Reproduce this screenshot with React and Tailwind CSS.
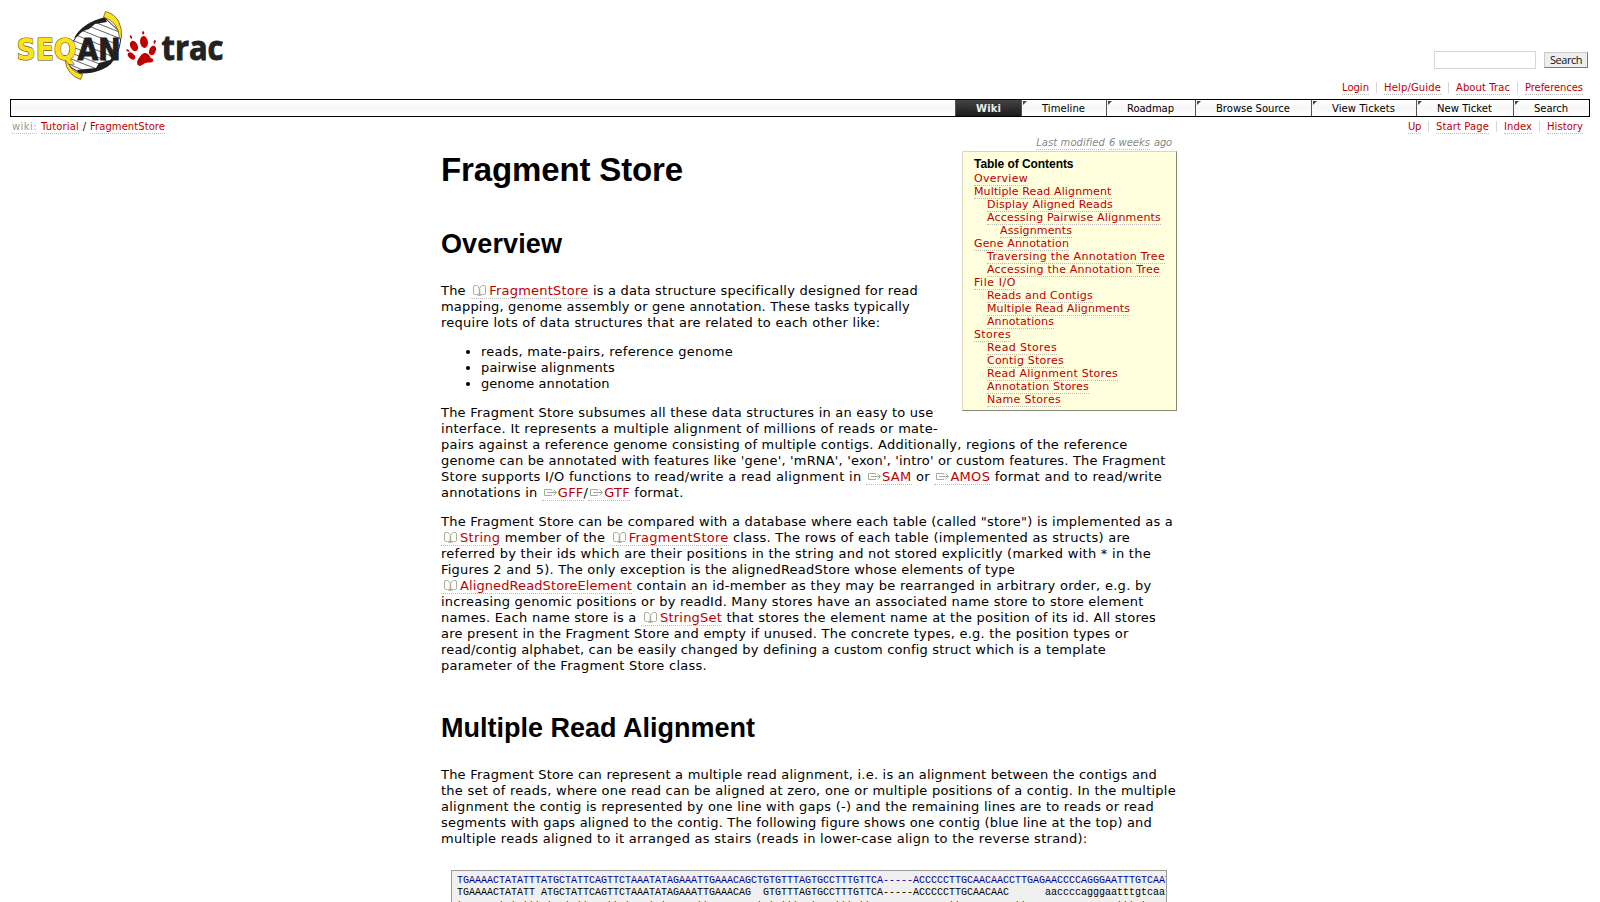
import { useLayoutEffect, useRef, useState } from "react";

/* Spreads letter spacing so that a run of text fills a given measure. */
function Fit({ w, className = "", children }) {
  const ref = useRef(null);
  const [spacing, setSpacing] = useState(0);
  useLayoutEffect(() => {
    const el = ref.current;
    const natural = el.getBoundingClientRect().width;
    setSpacing((w - natural) / el.textContent.length);
  }, [w]);
  return (
    <span
      ref={ref}
      className={`inline-block whitespace-pre ${className}`}
      style={{ letterSpacing: `${spacing}px` }}
    >
      {children}
    </span>
  );
}

const link = "border-b border-dotted border-[#bbbbbb] text-[#bb0000]";

function Line({ w, children }) {
  return (
    <div className="flex h-4">
      <Fit w={w}>{children}</Fit>
    </div>
  );
}

function Doc({ children }) {
  return (
    <a className={link}>
      <svg className="mr-[3px] ml-[3px] inline-block h-[11px] w-[13px] align-[-1px]" viewBox="0 0 13 11" fill="none" stroke="#a9ad97">
        <path d="M3.500 9.500H1.500Q.5 9.500 .5 8.500V2Q.5 .5 2 .5h1.500Q5.500 1 6.500 3.500Q7.500 1 9.500 .5H11Q12.500 .5 12.500 2v6.500q0 1-1 1H9.500" />
        <path d="M6.500 3.500V10.500M4 9.500q2 0 2.500 1q.5-1 2.500-1" strokeWidth="1.500" />
      </svg>
      {children}
    </a>
  );
}

function Ext({ children }) {
  return (
    <a className={link}>
      <svg className="mr-px ml-[2px] inline-block h-[9px] w-[13px] align-[0px]" viewBox="0 0 13 9" fill="none" stroke="#9fac98">
        <path d="M7.500 2.500V1.500H.5v6h7V6.500M3 4.500h9M9.500 1.500l3 3l-3 3" />
      </svg>
      {children}
    </a>
  );
}

function Logo() {
  return (
    <svg className="block h-[72px] w-[216px]" viewBox="15 10 216 72">
      <defs>
        <clipPath id="helix">
          <path d="M106 19Q84 23 74 40Q67 54 69 66L80 73Q101 72 113 60Q121 50 121 33Z" />
        </clipPath>
      </defs>
      <path d="M106 19Q84 23 74 40Q67 54 69 66L80 73Q101 72 113 60Q121 50 121 33Z" fill="#fff" stroke="#231f20" strokeWidth="1" />
      <g clipPath="url(#helix)" stroke="#231f20" strokeWidth=".7" fill="none">
        <path d="M92 21l32 13M86 25l38 15M81 30l40 16M76 35l42 17M72 40l44 18M68 45l46 19M66 51l44 17M66 57l36 14M66 63l24 10" />
      </g>
      <path d="M105 17Q82 23 74 38L78 36Q81 31 89 29L95 24L107 22Z" fill="#231f20" />
      <path d="M118 52Q113 66 101 70Q91 74 79 73.500L77 70L86 69L96 68L99 63L110 60Z" fill="#231f20" />
      <path d="M105.500 11.500Q114 13.500 118.500 21Q122.500 29 121.500 38L119.500 39Q119 22 103.500 17Z" fill="#ffe11b" stroke="#4d461c" strokeWidth=".7" />
      <path d="M68 59Q68 71 82.500 74.500L80.500 79.500Q67 75 65 60Z" fill="#ffe11b" stroke="#4d461c" strokeWidth=".7" />
      <g className="font-['DejaVu_Sans',sans-serif] text-[30px] font-bold">
        <text x="16.500" y="60.300" textLength="60" lengthAdjust="spacingAndGlyphs" fill="#ffe11b" stroke="#5a521c" strokeWidth="1.200" paintOrder="stroke">SEQ</text>
        <text x="77.500" y="60.300" textLength="43" lengthAdjust="spacingAndGlyphs" fill="#231f20" stroke="#231f20" strokeWidth="1">AN</text>
      </g>
      <g fill="#c00000">
        <path d="M144 53Q147 52.500 149 55Q150 58 153 59Q154 63 149 62.500Q145 62 142 65Q138 67.500 137 63Q137 60 139 58Q141 54 144 53Z" />
        <ellipse cx="144" cy="42" rx="3.900" ry="6" transform="rotate(-8 144 42)" />
        <ellipse cx="134" cy="46" rx="3.600" ry="5.500" transform="rotate(-28 134 46)" />
        <ellipse cx="152.500" cy="50.500" rx="3.200" ry="4.800" transform="rotate(22 152.500 50.500)" />
        <ellipse cx="131.500" cy="56" rx="2.800" ry="4.300" transform="rotate(-48 131.500 56)" />
        <path d="M143 30.500l1.500 2.500l-1.500 2l-1-2ZM130 35l2 1.500v2.500l-2-1.500ZM155 39.500l1 2l-2 3l-.5-3ZM126.500 49l2.500 1l.5 2l-3-1Z" />
      </g>
      <text x="161.500" y="60.300" textLength="62" lengthAdjust="spacingAndGlyphs" className="font-['Open_Sans',sans-serif] text-[34px] font-bold" fill="#222" stroke="#222" strokeWidth=".9">trac</text>
    </svg>
  );
}

function NavLinks({ items }) {
  return (
    <div className="flex h-[14px] items-start text-[10px] leading-[12px]">
      {items.map(([label, w, gapBefore, gapAfter], i) => (
        <div key={label} className="flex">
          {i > 0 && <div className={`h-[11px] border-l border-[#d7d7d7] ${gapBefore}`} />}
          <Fit w={w} className={`${link} h-[13px]`}>{label}</Fit>
          <div className={gapAfter} />
        </div>
      ))}
    </div>
  );
}

const tabs = [
  ["Timeline", 43, "w-[85px]"],
  ["Roadmap", 47, "w-[89px]"],
  ["Browse Source", 74, "w-[116px]"],
  ["View Tickets", 63, "w-[105px]"],
  ["New Ticket", 55, "w-[97px]"],
  ["Search", 34, "w-[76px]"],
];

const toc = [
  ["Overview", 54, "pl-0"],
  ["Multiple Read Alignment", 137.5, "pl-0"],
  ["Display Aligned Reads", 126, "pl-[13px]"],
  ["Accessing Pairwise Alignments", 174, "pl-[13px]"],
  ["Assignments", 72, "pl-[26px]"],
  ["Gene Annotation", 95, "pl-0"],
  ["Traversing the Annotation Tree", 178, "pl-[13px]"],
  ["Accessing the Annotation Tree", 173, "pl-[13px]"],
  ["File I/O", 42, "pl-0"],
  ["Reads and Contigs", 106, "pl-[13px]"],
  ["Multiple Read Alignments", 143, "pl-[13px]"],
  ["Annotations", 67, "pl-[13px]"],
  ["Stores", 37, "pl-0"],
  ["Read Stores", 70, "pl-[13px]"],
  ["Contig Stores", 77, "pl-[13px]"],
  ["Read Alignment Stores", 131, "pl-[13px]"],
  ["Annotation Stores", 102, "pl-[13px]"],
  ["Name Stores", 74, "pl-[13px]"],
];

const contig =
  "TGAAAACTATATTTATGCTATTCAGTTCTAAATATAGAAATTGAAACAGCTGTGTTTAGTGCCTTTGTTCA-----ACCCCCTTGCAACAACCTTGAGAACCCCAGGGAATTTGTCAAT";
const reads =
  "TGAAAACTATATT ATGCTATTCAGTTCTAAATATAGAAATTGAAACAG  GTGTTTAGTGCCTTTGTTCA-----ACCCCCTTGCAACAAC      aaccccagggaatttgtcaat";

function Heading({ as: Tag, w, className, children }) {
  return (
    <Tag className={`flex font-['Liberation_Sans',sans-serif] font-bold ${className}`}>
      <Fit w={w}>{children}</Fit>
    </Tag>
  );
}

export default function App() {
  return (
    <div className="h-[902px] overflow-hidden bg-white px-[10px] font-['DejaVu_Sans',sans-serif] text-[13px] leading-4 text-black">
      <header className="flex h-[99px] justify-between">
        <div className="pt-[10px] pl-[5px]">
          <Logo />
        </div>
        <div className="flex flex-col items-end pt-[51px]">
          <div className="flex items-center pr-[2px]">
            <div className="mr-2 h-[18px] w-[102px] border border-[#d7d7d7]" />
            <button className="flex h-4 w-11 justify-center border border-t-[#cccccc] border-r-[#777777] border-b-[#777777] border-l-[#cccccc] bg-[#eeeeee] font-['Open_Sans',sans-serif] text-[11px] leading-[14px] text-[#111111]">
              <Fit w={32}>Search</Fit>
            </button>
          </div>
          <div className="mt-[13px] pr-[7px]">
            <NavLinks
              items={[
                ["Login", 27, "", "w-[7px]"],
                ["Help/Guide", 57, "mr-[7px]", "w-[7px]"],
                ["About Trac", 54, "mr-[7px]", "w-[7px]"],
                ["Preferences", 58, "mr-[7px]", ""],
              ]}
            />
          </div>
        </div>
      </header>

      <nav className="flex h-[18px] justify-end border border-black bg-gradient-to-b from-white via-[#f7f7f7] to-white text-[10px] leading-[17px]">
        <div className="flex w-[66px] justify-center border-l border-[#555555] bg-gradient-to-b from-[#444444] to-[#1c1c1c] font-bold text-[#eeeeee]">
          <Fit w={25}>Wiki</Fit>
        </div>
        {tabs.map(([label, w, width]) => (
          <div key={label} className={`flex items-start border-l border-[#555555] ${width}`}>
            <svg className="mt-px ml-px h-1 w-1 shrink-0" viewBox="0 0 4 4">
              <path d="M0 0h4L0 4z" fill="#444" />
            </svg>
            <div className="flex grow justify-center pr-[6px]">
              <Fit w={w}>{label}</Fit>
            </div>
          </div>
        ))}
      </nav>

      <div className="flex h-[18px] justify-between pt-[4px] pr-[7px] pl-[2px]">
        <div className="flex text-[10px] leading-[12px]">
          <Fit w={25} className="h-[13px] border-b border-dotted border-[#bbbbbb] text-[#999999]">wiki:</Fit>
          <Fit w={38} className={`ml-1 h-[13px] ${link}`}>Tutorial</Fit>
          <span className="w-[11px] text-center">/</span>
          <Fit w={75} className={`h-[13px] ${link}`}>FragmentStore</Fit>
        </div>
        <NavLinks
          items={[
            ["Up", 13, "", "w-[7px]"],
            ["Start Page", 53, "mr-[7px]", "w-[7px]"],
            ["Index", 28, "mr-[7px]", "w-[7px]"],
            ["History", 36, "mr-[7px]", ""],
          ]}
        />
      </div>

      <main className="ml-[431px] w-[736px]">
        <div className="flex h-4 justify-end gap-1 pt-[2px] pr-[5px] text-[10px] leading-[12px] text-[#888888] italic">
          <Fit w={69} className="h-[13px] border-b border-dotted border-[#bbbbbb]">Last modified</Fit>
          <Fit w={41} className="h-[13px] border-b border-dotted border-[#bbbbbb]">6 weeks</Fit>
          <Fit w={18}>ago</Fit>
        </div>

        <aside className="float-right h-[260px] w-[215px] border border-t-[#d7d7c0] border-r-[#888877] border-b-[#888877] border-l-[#d7d7c0] bg-[#ffffdd] pt-[5px] pl-[11px] text-[11px] leading-[13px]">
          <Heading as="h4" w={99.5} className="h-[15px] text-[12px] leading-[14px]">Table of Contents</Heading>
          {toc.map(([label, w, indent]) => (
            <div key={label} className={`flex h-[13px] ${indent}`}>
              <Fit w={w} className={`h-[14px] ${link}`}>{label}</Fit>
            </div>
          ))}
        </aside>

        <Heading as="h1" w={242} className="h-[76px] pt-px text-[33px] leading-[36px]">Fragment Store</Heading>
        <Heading as="h2" w={121} className="h-[56px] pt-px text-[27px] leading-[32px]">Overview</Heading>

        <div>
          <Line w={477}>The <Doc>FragmentStore</Doc> is a data structure specifically designed for read</Line>
          <Line w={469}>mapping, genome assembly or gene annotation. These tasks typically</Line>
          <Line w={439.5}>require lots of data structures that are related to each other like:</Line>
        </div>
        <ul className="mt-[13px] ml-10 list-disc">
          <li className="h-4"><Fit w={252}>reads, mate-pairs, reference genome</Fit></li>
          <li className="h-4"><Fit w={134}>pairwise alignments</Fit></li>
          <li className="h-4"><Fit w={128.500}>genome annotation</Fit></li>
        </ul>
        <div className="mt-[13px]">
          <Line w={492.500}>The Fragment Store subsumes all these data structures in an easy to use</Line>
          <Line w={497}>interface. It represents a multiple alignment of millions of reads or mate-</Line>
          <Line w={686.500}>pairs against a reference genome consisting of multiple contigs. Additionally, regions of the reference</Line>
          <Line w={724.500}>genome can be annotated with features like 'gene', 'mRNA', 'exon', 'intro' or custom features. The Fragment</Line>
          <Line w={721}>Store supports I/O functions to read/write a read alignment in <Ext>SAM</Ext> or <Ext>AMOS</Ext> format and to read/write</Line>
          <Line w={242.500}>annotations in <Ext>GFF</Ext>/<Ext>GTF</Ext> format.</Line>
        </div>
        <div className="mt-[13px]">
          <Line w={732}>The Fragment Store can be compared with a database where each table (called "store") is implemented as a</Line>
          <Line w={689}><Doc>String</Doc> member of the <Doc>FragmentStore</Doc> class. The rows of each table (implemented as structs) are</Line>
          <Line w={710}>referred by their ids which are their positions in the string and not stored explicitly (marked with * in the</Line>
          <Line w={574}>Figures 2 and 5). The only exception is the alignedReadStore whose elements of type</Line>
          <div className="flex h-4">
            <Fit w={191}><Doc>AlignedReadStoreElement</Doc></Fit>
            <Fit w={519.500}> contain an id-member as they may be rearranged in arbitrary order, e.g. by</Fit>
          </div>
          <Line w={702.500}>increasing genomic positions or by readId. Many stores have an associated name store to store element</Line>
          <div className="flex h-4">
            <Fit w={200}>names. Each name store is a </Fit>
            <Fit w={81}><Doc>StringSet</Doc></Fit>
            <Fit w={434}> that stores the element name at the position of its id. All stores</Fit>
          </div>
          <Line w={687.500}>are present in the Fragment Store and empty if unused. The concrete types, e.g. the position types or</Line>
          <Line w={665}>read/contig alphabet, can be easily changed by defining a custom config struct which is a template</Line>
          <Line w={266}>parameter of the Fragment Store class.</Line>
        </div>

        <Heading as="h2" w={314} className="mt-[38px] h-[55px] text-[27px] leading-[32px]">Multiple Read Alignment</Heading>
        <div>
          <Line w={716}>The Fragment Store can represent a multiple read alignment, i.e. is an alignment between the contigs and</Line>
          <Line w={735}>the set of reads, where one read can be aligned at zero, one or multiple positions of a contig. In the multiple</Line>
          <Line w={713}>alignment the contig is represented by one line with gaps (-) and the remaining lines are to reads or read</Line>
          <Line w={711}>segments with gaps aligned to the contig. The following figure shows one contig (blue line at the top) and</Line>
          <Line w={646.500}>multiple reads aligned to it arranged as stairs (reads in lower-case align to the reverse strand):</Line>
        </div>

        <pre className="mt-[23px] ml-[10px] h-[60px] w-[716px] overflow-hidden border border-[#999999] bg-[#f0f0f0] pt-[4px] pl-[5px] font-['Liberation_Mono',monospace] text-[10px] leading-[12px]">
          <div className="text-[#000099]">{contig}</div>
          <div>{reads}</div>
          <div className="pt-px">{contig.toLowerCase()}</div>
        </pre>
      </main>
    </div>
  );
}
